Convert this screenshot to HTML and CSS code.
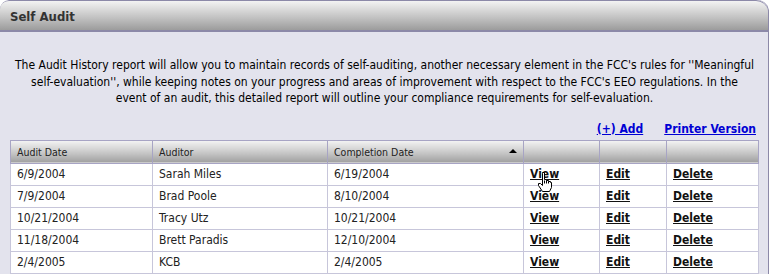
FILE: index.html
```html
<!DOCTYPE html>
<html lang="en">
<head>
    <meta charset="UTF-8">
    <title>Self Audit</title>
    <link rel="stylesheet" href="styles.css">
</head>
<body>
    <div class="panel">
        <div class="panel-header">Self Audit</div>
        <div class="panel-body">
            <p class="intro">The Audit History report will allow you to maintain records of self-auditing, another necessary element in the FCC's rules for ''Meaningful<br>self-evaluation'', while keeping notes on your progress and areas of improvement with respect to the FCC's EEO regulations. In the<br>event of an audit, this detailed report will outline your compliance requirements for self-evaluation.</p>
            <div class="toolbar">
                <a href="#">(+) Add</a>
                <a href="#">Printer Version</a>
            </div>
            <table class="audits">
                <thead>
                    <tr>
                        <th class="c-date">Audit Date</th>
                        <th class="c-auditor">Auditor</th>
                        <th class="c-done sorted">Completion Date<span class="sort-arrow"></span></th>
                        <th class="c-view"></th>
                        <th class="c-edit"></th>
                        <th class="c-del"></th>
                    </tr>
                </thead>
                <tbody>
                    <tr><td>6/9/2004</td><td>Sarah Miles</td><td>6/19/2004</td><td class="hovered"><a href="#">View</a>
                        <!-- mouse pointer from the screenshot -->
                        <svg class="cursor" width="14" height="20" viewBox="0 0 14 20"><path d="M4.5 0.5h2v7h2v1h2v1h2v1h1v5l-2 4h-7l-4-6v-2h2l2 2v-12z" fill="#fff" stroke="#000" stroke-width="1"/><path d="M6.5 8.5v3M8.5 8.5v3M10.5 9.5v2" stroke="#000" stroke-width="1"/></svg>
                    </td><td><a href="#">Edit</a></td><td><a href="#">Delete</a></td></tr>
                    <tr><td>7/9/2004</td><td>Brad Poole</td><td>8/10/2004</td><td><a href="#">View</a></td><td><a href="#">Edit</a></td><td><a href="#">Delete</a></td></tr>
                    <tr><td>10/21/2004</td><td>Tracy Utz</td><td>10/21/2004</td><td><a href="#">View</a></td><td><a href="#">Edit</a></td><td><a href="#">Delete</a></td></tr>
                    <tr><td>11/18/2004</td><td>Brett Paradis</td><td>12/10/2004</td><td><a href="#">View</a></td><td><a href="#">Edit</a></td><td><a href="#">Delete</a></td></tr>
                    <tr><td>2/4/2005</td><td>KCB</td><td>2/4/2005</td><td><a href="#">View</a></td><td><a href="#">Edit</a></td><td><a href="#">Delete</a></td></tr>
                </tbody>
            </table>
        </div>
    </div>
</body>
</html>
```

FILE: styles.css
```css
body {
    margin: 0;
    font-family: "DejaVu Sans Condensed", "DejaVu Sans", sans-serif;
    font-size: 11.5px;
    color: #000;
    background: #fff;
}
.panel {
    width: 768px;
    height: 274px;
    background-color: #e3e3ed;
    border-right: 1px solid #8c89a8;
    border-radius: 9px 12px 0 0;
    overflow: hidden;
}
.panel-header {
    height: 29px;
    line-height: 31px;
    padding-left: 10px;
    font-weight: bold;
    font-size: 13px;
    color: #333;
    background: linear-gradient(#f3f3f3, #c4c4c4 55%, #9c9c9c);
    border-top: 1px solid #8c89a8;
    border-bottom: 2px solid #8c89a8;
    border-radius: 9px 12px 0 0;
}
.panel-body {
    padding: 25px 9px 0 10px;
}
.intro {
    margin: 0 -6px;
    text-align: center;
    font-size: 12px;
    line-height: 16.5px;
    white-space: nowrap;
}
.toolbar {
    display: flex;
    justify-content: flex-end;
    gap: 21px;
    margin-top: 15px;
    padding-right: 3px;
    height: 18px;
}
.toolbar a {
    color: #0000d4;
    font-weight: bold;
    font-size: 12px;
}
.audits {
    width: 749px;
    border-collapse: collapse;
    background: #fff;
    border: 1px solid #a7a4c4;
}
.audits th, .audits td {
    text-align: left;
    padding: 0 6px;
    height: 21px;
    border: 1px solid #c7c6da;
    color: #222;
    font-weight: normal;
}
.audits td {
    font-size: 12px;
}
.audits th {
    height: 22px;
    font-size: 10.5px;
    border-color: #a7a4c4;
    background: linear-gradient(#f4f4f4, #c8c8c8 55%, #a0a0a0);
}
.audits td a {
    color: #111;
    font-weight: bold;
    font-size: 12px;
}
.c-date { width: 129px; }
.c-auditor { width: 162px; }
.c-done { width: 183px; }
.c-view { width: 63px; }
.c-edit { width: 54px; }
.sorted { position: relative; }
.sort-arrow {
    position: absolute;
    right: 6px;
    top: 8px;
    border-left: 4px solid transparent;
    border-right: 4px solid transparent;
    border-bottom: 4px solid #000;
}
.hovered { position: relative; }
.cursor {
    position: absolute;
    left: 14px;
    top: 8px;
}
```
